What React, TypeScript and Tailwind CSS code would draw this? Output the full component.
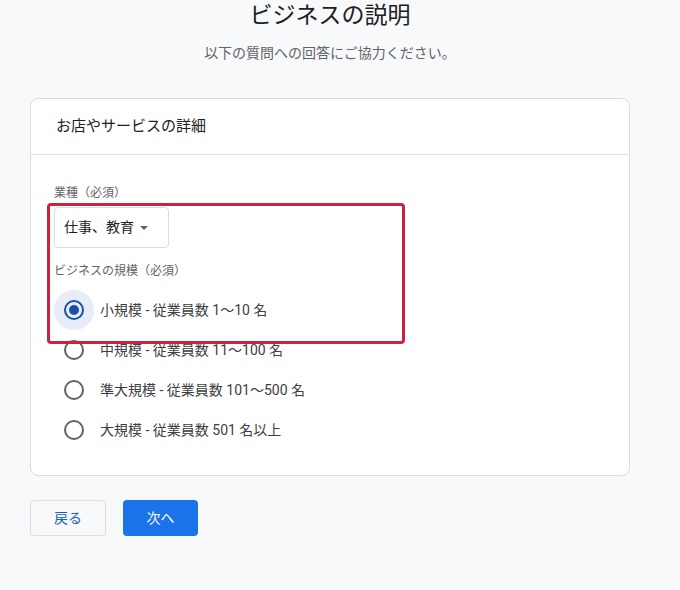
import { useState } from 'react';

const sizes = [
  '小規模 - 従業員数 1〜10 名',
  '中規模 - 従業員数 11〜100 名',
  '準大規模 - 従業員数 101〜500 名',
  '大規模 - 従業員数 501 名以上',
];

function Radio({ checked }: { checked: boolean }) {
  return (
    <span
      className={
        'flex h-10 w-10 shrink-0 items-center justify-center rounded-full ' +
        (checked ? 'bg-[#e6edf8]' : '')
      }
    >
      <span
        className={
          'flex h-5 w-5 items-center justify-center rounded-full border-2 ' +
          (checked ? 'border-[#1a4fa3]' : 'border-[#5f6368]')
        }
      >
        {checked && <span className="h-2.5 w-2.5 rounded-full bg-[#1a4fa3]" />}
      </span>
    </span>
  );
}

export default function App() {
  const [size, setSize] = useState(0);

  return (
    <div
      className="min-h-[590px] bg-[#f8f9fa] text-[#202124]"
      style={{ fontFamily: 'Roboto, "Noto Sans CJK JP", "Noto Sans", sans-serif' }}
    >
      <div className="ml-[30px] w-[600px]">
        <h1 className="pt-px text-center text-[23px] leading-[30px] font-normal text-[#202124]">ビジネスの説明</h1>
        <p className="mt-[12px] text-center text-[14px] leading-[20px] text-[#5f6368]">
          以下の質問への回答にご協力ください。
        </p>

        <div className="mt-[35px] rounded-lg border border-[#dadce0] bg-white">
          <div className="flex h-[56px] items-center border-b border-[#e0e0e0] pl-[25px] text-[15px]">
            お店やサービスの詳細
          </div>

          <div className="relative px-[23px] pt-[30px] pb-[25px]">
            <p className="text-[12px] leading-[16px] text-[#5f6368]">業種（必須）</p>
            <button className="mt-[6px] flex h-[41px] w-[115px] items-center rounded border border-[#dadce0] bg-white pl-[9px] text-[14px] text-[#202124]">
              仕事、教育
              <span className="ml-[6px] h-0 w-0 border-x-[4px] border-t-[4px] border-x-transparent border-t-[#5f6368]" />
            </button>

            <p className="mt-[15px] text-[12px] leading-[16px] text-[#5f6368]">ビジネスの規模（必須）</p>
            <ul className="mt-[11px]">
              {sizes.map((s, i) => (
                <li
                  key={s}
                  className="flex h-10 cursor-pointer items-center gap-[6px] text-[14px]"
                  onClick={() => setSize(i)}
                >
                  <Radio checked={size === i} />
                  <span className="text-[#3c4043]">{s}</span>
                </li>
              ))}
            </ul>

            {/* annotation box */}
            <div className="pointer-events-none absolute left-[16px] top-[48px] h-[141px] w-[358px] rounded-[4px] border-[3px] border-[#c8233f]" />
          </div>
        </div>

        <div className="mt-[24px] flex gap-[17px]">
          <button className="h-[36px] w-[76px] rounded border border-[#dadce0] bg-[#f8f9fa] text-[14px] text-[#1a5fc4]">
            戻る
          </button>
          <button className="h-[36px] w-[75px] rounded bg-[#1a73e8] text-[14px] text-white">次へ</button>
        </div>
      </div>
    </div>
  );
}
